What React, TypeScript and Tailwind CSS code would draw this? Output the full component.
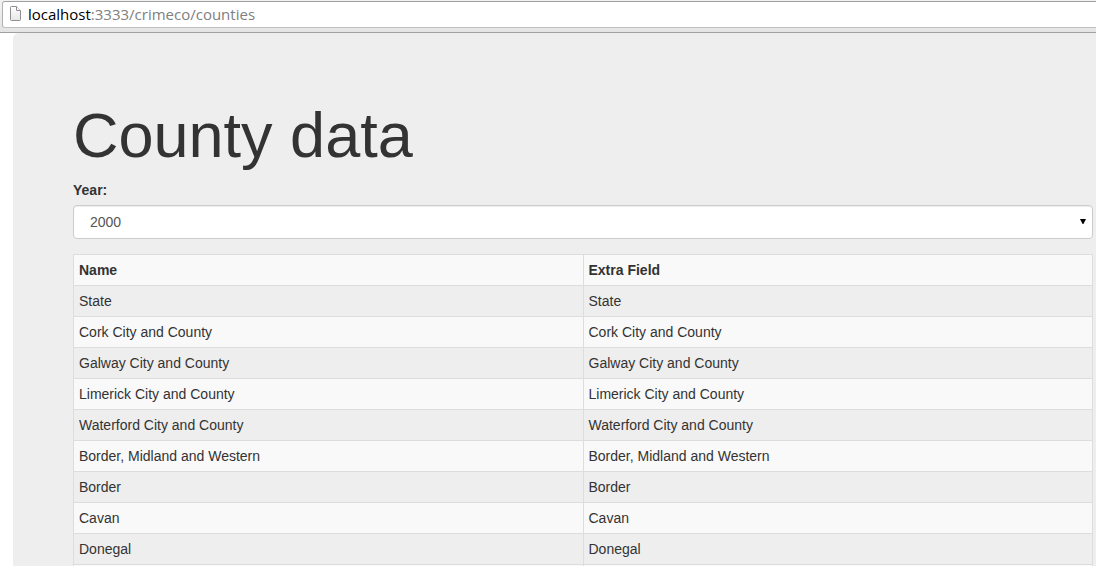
import { useState } from "react";

const counties = [
  "State",
  "Cork City and County",
  "Galway City and County",
  "Limerick City and County",
  "Waterford City and County",
  "Border, Midland and Western",
  "Border",
  "Cavan",
  "Donegal",
  "Leitrim",
];

const years = ["2000", "2001", "2002", "2003", "2004"];

function PageIcon() {
  return (
    <svg width="13" height="16" viewBox="0 0 13 16" aria-hidden="true" className="shrink-0">
      <defs>
        <linearGradient id="sheet" x1="0" y1="0" x2="0" y2="1">
          <stop offset="0" stopColor="#ffffff" />
          <stop offset="1" stopColor="#e6e6e6" />
        </linearGradient>
      </defs>
      <path d="M1.5 1.5Q1.5 .5 2.5 .5H7.5L11.5 4.5V13.5Q11.5 14.5 10.5 14.5H2.5Q1.5 14.5 1.5 13.5Z" fill="url(#sheet)" stroke="#8e8e8e" />
      <path d="M7.5 .5V4.5H11.5" fill="#fff" stroke="#8e8e8e" />
    </svg>
  );
}

function AddressBar() {
  return (
    <header className="flex h-[33px] shrink-0 items-start border-b border-[#a0a0a0] bg-gradient-to-b from-[#f2f2f2] to-[#e4e4e4] pt-px pl-[2px]">
      <div className="flex h-[27px] grow items-center gap-[6px] rounded-l-[3px] border border-r-0 border-t-[#a0a0a0] border-b-[#c0c0c0] border-l-[#b0b0b0] bg-white pb-px pl-[6px]">
        <PageIcon />
        <div className="font-['Open_Sans',sans-serif] text-[15px] leading-5 text-[#808080]">
          <span className="text-black">localhost</span>:3333/crimeco/counties
        </div>
      </div>
    </header>
  );
}

export default function App() {
  const [year, setYear] = useState("2000");

  return (
    <div className="flex h-screen flex-col overflow-hidden bg-white font-['Liberation_Sans',Arial,sans-serif] text-sm leading-5 text-[#333]">
      <AddressBar />
      <main className="ml-[13px] grow overflow-hidden rounded-tl-md bg-[#eee] pt-[68px] pr-[3px] pl-[60px]">
        <h1 className="mb-[10px] text-[63px] leading-[69px]">County data</h1>
        <label htmlFor="year" className="mb-[5px] block font-bold">
          Year:
        </label>
        <div className="relative mb-[15px]">
          <select
            id="year"
            value={year}
            onChange={(e) => setYear(e.target.value)}
            className="block h-[34px] w-full appearance-none rounded border border-[#ccc] bg-white px-4 text-[#555] shadow-[inset_0_1px_1px_rgba(0,0,0,0.075)]"
          >
            {years.map((y) => (
              <option key={y}>{y}</option>
            ))}
          </select>
          <svg width="6" height="5" viewBox="0 0 6 5" aria-hidden="true" className="pointer-events-none absolute top-[14px] right-[7px]">
            <path d="M0 0H6L3.4 5H2.6Z" fill="#000" />
          </svg>
        </div>
        <table className="w-full table-fixed border-collapse border border-[#ddd] text-left">
          <thead>
            <tr className="bg-[#f9f9f9]">
              <th className="border border-[#ddd] p-[5px] font-bold">Name</th>
              <th className="border border-[#ddd] p-[5px] font-bold">Extra Field</th>
            </tr>
          </thead>
          <tbody>
            {counties.map((name) => (
              <tr key={name} className="even:bg-[#f9f9f9]">
                <td className="border border-[#ddd] p-[5px]">{name}</td>
                <td className="border border-[#ddd] p-[5px]">{name}</td>
              </tr>
            ))}
          </tbody>
        </table>
      </main>
    </div>
  );
}
